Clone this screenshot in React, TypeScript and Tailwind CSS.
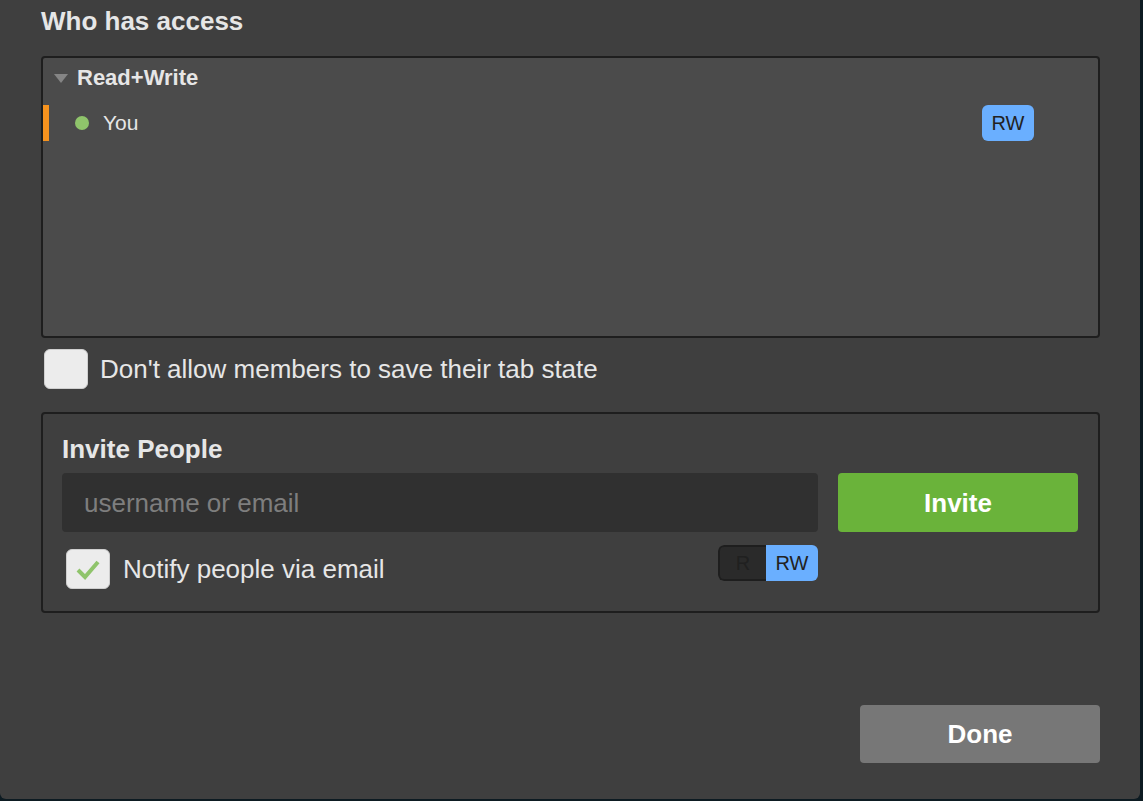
import React from "react";

export default function App() {
  const font = { fontFamily: '"Liberation Sans", Arial, sans-serif' };
  return (
    <div className="w-[1143px] h-[801px] bg-[#0d1b22] overflow-hidden" style={font}>
      <div className="w-[1140px] h-[799px] bg-[#3f3f3f] rounded-b-[6px] pl-[41px] pr-[40px] flex flex-col">
        <h1 className="text-[26px] leading-[40px] font-bold text-[#e6e6e6] mt-[1px]">Who has access</h1>
        <div className="mt-[15px] h-[282px] bg-[#4b4b4b] border-2 border-[#1e1e1e] rounded-[4px] flex flex-col">
          <div className="flex items-center h-[38px] pl-[11px] pt-[1px]">
            <svg width="14" height="10" viewBox="0 0 14 10" className="mt-[3px]">
              <polygon points="0,0 14,0 7,9" fill="#858585" />
            </svg>
            <span className="ml-[9px] text-[22px] leading-[24px] font-bold text-[#e6e6e6]">Read+Write</span>
          </div>
          <div className="flex items-center h-[36px] mt-[9px]">
            <div className="w-[6px] h-[36px] bg-[#f7931e]" />
            <div className="ml-[26px] w-[14px] h-[14px] rounded-full bg-[#8fc46b]" />
            <span className="ml-[14px] text-[21px] leading-[24px] text-[#e6e6e6]">You</span>
            <div className="ml-auto mr-[64px] w-[52px] h-[36px] rounded-[6px] bg-[#6aafff] flex items-center justify-center text-[20px] text-[#222]">
              RW
            </div>
          </div>
        </div>
        <div className="flex items-center mt-[10px] ml-[3px] h-[42px]">
          <div className="w-[44px] h-[40px] rounded-[6px] bg-[#ececec] border border-[#cfcfcf]" />
          <span className="ml-[12px] text-[26px] leading-[30px] text-[#e6e6e6]">Don't allow members to save their tab state</span>
        </div>
        <div className="mt-[22px] h-[201px] border-2 border-[#1e1e1e] rounded-[4px] pl-[19px] pr-[20px] pt-[20px]">
          <div className="text-[26px] font-bold text-[#e6e6e6] leading-[30px]">Invite People</div>
          <div className="flex mt-[9px] gap-[20px]">
            <div className="flex-1 flex flex-col">
              <div className="h-[59px] bg-[#303030] rounded-[4px] flex items-center pl-[22px] text-[26px] leading-[30px] text-[#7e7e7e]">
                username or email
              </div>
              <div className="flex items-start justify-between mt-[13px]">
                <div className="flex items-center ml-[4px] mt-[4px]">
                  <div className="w-[44px] h-[40px] rounded-[6px] bg-[#ececec] border border-[#cfcfcf] flex items-center justify-center">
                    <svg width="26" height="22" viewBox="0 0 26 22">
                      <polyline points="3,12 10,19 23,4" fill="none" stroke="#8fc46b" strokeWidth="4" />
                    </svg>
                  </div>
                  <span className="ml-[13px] text-[26px] leading-[30px] text-[#e6e6e6]">Notify people via email</span>
                </div>
                <div className="flex h-[36px] rounded-[6px] overflow-hidden">
                  <div className="w-[48px] bg-[#2a2a2a] border-2 border-r-0 border-[#1e1e1e] rounded-l-[6px] flex items-center justify-center text-[20px] text-[#202020]">
                    R
                  </div>
                  <div className="w-[52px] bg-[#6aafff] flex items-center justify-center text-[20px] text-[#222]">
                    RW
                  </div>
                </div>
              </div>
            </div>
            <button className="w-[240px] h-[59px] bg-[#6ab33a] rounded-[4px] text-[26px] leading-[30px] font-bold text-white">
              Invite
            </button>
          </div>
        </div>
        <div className="flex justify-end mt-[92px]">
          <button className="w-[240px] h-[58px] bg-[#777777] rounded-[4px] text-[26px] leading-[30px] font-bold text-white">
            Done
          </button>
        </div>
      </div>
    </div>
  );
}
